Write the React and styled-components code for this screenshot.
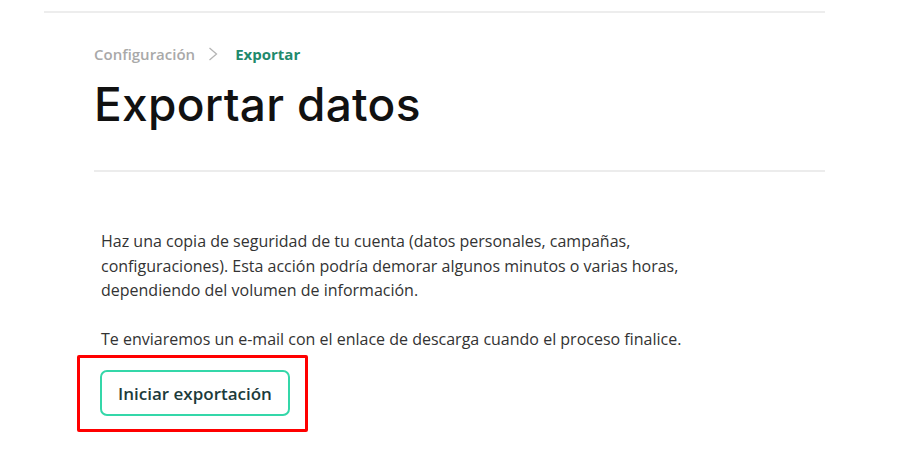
import React from 'react';
import styled, { createGlobalStyle } from 'styled-components';

const GlobalStyle = createGlobalStyle`
	body {
		margin: 0;
		background: #ffffff;
		font-family: 'Open Sans', 'Liberation Sans', sans-serif;
	}
`;

const Page = styled.div`
	width: 921px;
	height: 456px;
	overflow: hidden;
	background: #ffffff;
`;

const TopBar = styled.div`
	margin: 11px 96px 0 44px;
	height: 2px;
	background: #ededed;
`;

const Main = styled.main`
	width: 731px;
	margin-left: 94px;
`;

const Header = styled.header`
	padding-top: 31px;
	padding-bottom: 38px;
	border-bottom: 2px solid #ececec;
`;

const Breadcrumb = styled.nav`
	display: flex;
	align-items: center;
	gap: 13px;
	font-size: 15px;
	font-weight: 600;
	line-height: 20px;
`;

const Crumb = styled.span`
	color: ${(p) => (p.$active ? '#1f8a6c' : '#a9a9a9')};
	font-weight: ${(p) => (p.$active ? 700 : 600)};
`;

const Chevron = styled.svg`
	width: 14px;
	height: 14px;
`;

const Title = styled.h1`
	margin: 12px 0 0;
	font-family: 'Inter', 'Liberation Sans', sans-serif;
	font-weight: 500;
	font-size: 46px;
	line-height: 56px;
	letter-spacing: 0.3px;
	color: #111111;
`;

const Body = styled.section`
	padding: 57px 0 0 7px;
`;

const Text = styled.p`
	margin: 0 0 24px;
	font-size: 16px;
	line-height: 24.5px;
	color: #333333;
	max-width: 640px;
`;

const Highlight = styled.div`
	display: inline-block;
	margin: -20px 0 0 -24px;
	padding: 12px 15px 13px 20px;
	border: 3px solid #ff0000;
	border-radius: 2px;
`;

const Button = styled.button`
	display: block;
	height: 46px;
	padding: 0 16px;
	border: 2px solid #34d7a9;
	border-radius: 7px;
	background: #ffffff;
	font-family: 'Open Sans', 'Liberation Sans', sans-serif;
	font-size: 17px;
	font-weight: 600;
	color: #1c3b3b;
	cursor: pointer;
`;

export default function App() {
	return (
		<Page>
			<GlobalStyle />
			<TopBar />
			<Main>
				<Header>
					<Breadcrumb>
						<Crumb>Configuración</Crumb>
						<Chevron viewBox="0 0 14 14" fill="none">
							<path d="M1.5 1 L8.5 7 L1.5 13" stroke="#b5b5b5" strokeWidth="1.3" />
						</Chevron>
						<Crumb $active>Exportar</Crumb>
					</Breadcrumb>
					<Title>Exportar datos</Title>
				</Header>
				<Body>
					<Text>
						Haz una copia de seguridad de tu cuenta (datos personales, campañas,
						configuraciones). Esta acción podría demorar algunos minutos o varias horas,
						dependiendo del volumen de información.
					</Text>
					<Text>
						Te enviaremos un e-mail con el enlace de descarga cuando el proceso finalice.
					</Text>
					<Highlight>
						<Button>Iniciar exportación</Button>
					</Highlight>
				</Body>
			</Main>
		</Page>
	);
}
